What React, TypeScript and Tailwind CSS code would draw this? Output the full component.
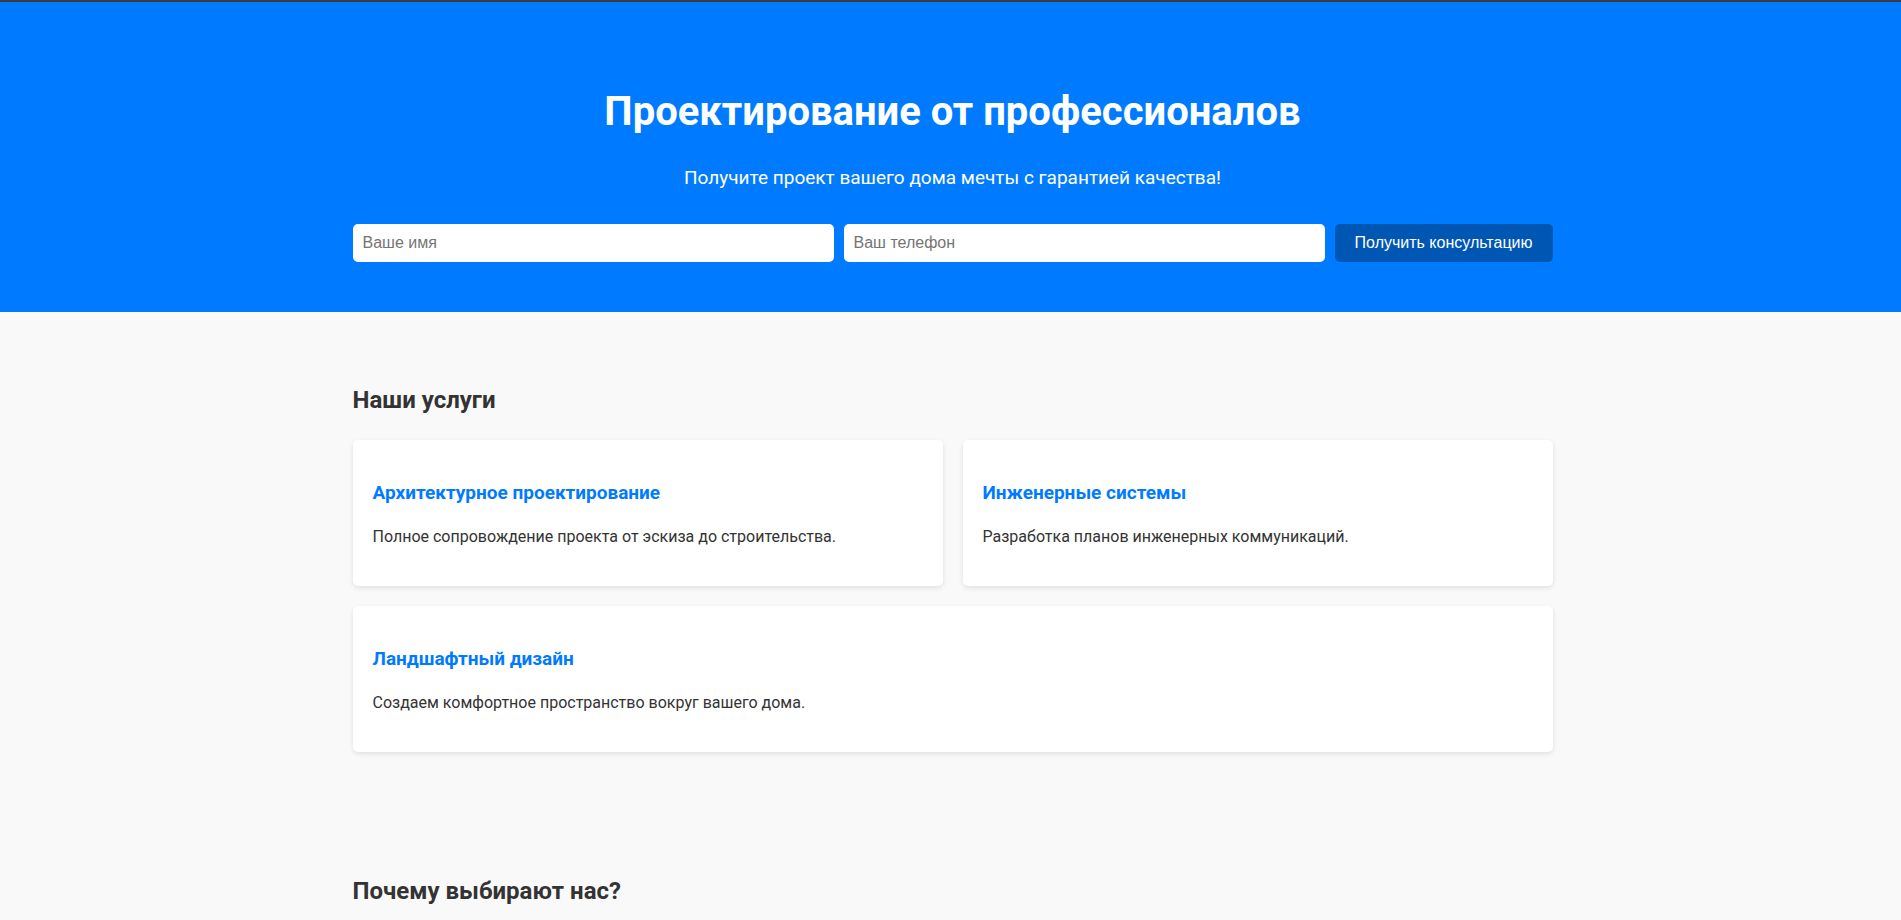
const services = [
  { title: 'Архитектурное проектирование', text: 'Полное сопровождение проекта от эскиза до строительства.' },
  { title: 'Инженерные системы', text: 'Разработка планов инженерных коммуникаций.' },
  { title: 'Ландшафтный дизайн', text: 'Создаем комфортное пространство вокруг вашего дома.' },
];

const field =
  "min-w-0 flex-1 rounded-[5px] bg-white p-2.5 font-['Liberation_Sans',sans-serif] text-base leading-[18px] text-black placeholder:text-[#757575]";

export default function App() {
  return (
    <div className="h-screen overflow-hidden bg-[#f9f9f9] font-[Roboto,sans-serif] text-base leading-[26px] text-[#333]">
      <div className="h-0.5 bg-[#3a3d45]" />
      <header className="bg-[#007bff] pt-[78px] pr-5 pb-[50px] pl-6 text-center text-white">
        <h1 className="text-[40px] leading-[64px] font-bold">Проектирование от профессионалов</h1>
        <p className="mt-[18px] text-[19px] leading-[31px]">Получите проект вашего дома мечты с гарантией качества!</p>
        <form className="mx-auto mt-[31px] flex max-w-[1200px] gap-2.5" onSubmit={(e) => e.preventDefault()}>
          <input className={field} type="text" aria-label="Ваше имя" placeholder="Ваше имя" />
          <input className={field} type="tel" aria-label="Ваш телефон" placeholder="Ваш телефон" />
          <button
            type="submit"
            className="rounded-[5px] bg-[#0056b3] px-5 py-2.5 font-['Liberation_Sans',sans-serif] text-base leading-[18px] text-white"
          >
            Получить консультацию
          </button>
        </form>
      </header>
      <main className="pr-5 pl-6">
        <section className="mx-auto max-w-[1200px] pt-[69px] pb-[51px]">
          <h2 className="text-2xl leading-[38px] font-bold">Наши услуги</h2>
          <div className="mt-[21px] flex flex-wrap gap-5">
            {services.map((service) => (
              <article key={service.title} className="grow basis-[400px] rounded-[5px] bg-white px-5 pt-[38px] pb-9 shadow-[0_2px_5px_rgba(0,0,0,0.1)]">
                <h3 className="text-[19px] leading-[30px] font-bold text-[#007bff]">{service.title}</h3>
                <p className="mt-4">{service.text}</p>
              </article>
            ))}
          </div>
        </section>
        <section className="mx-auto max-w-[1200px] pt-[69px]">
          <h2 className="text-2xl leading-[38px] font-bold">Почему выбирают нас?</h2>
        </section>
      </main>
    </div>
  );
}
